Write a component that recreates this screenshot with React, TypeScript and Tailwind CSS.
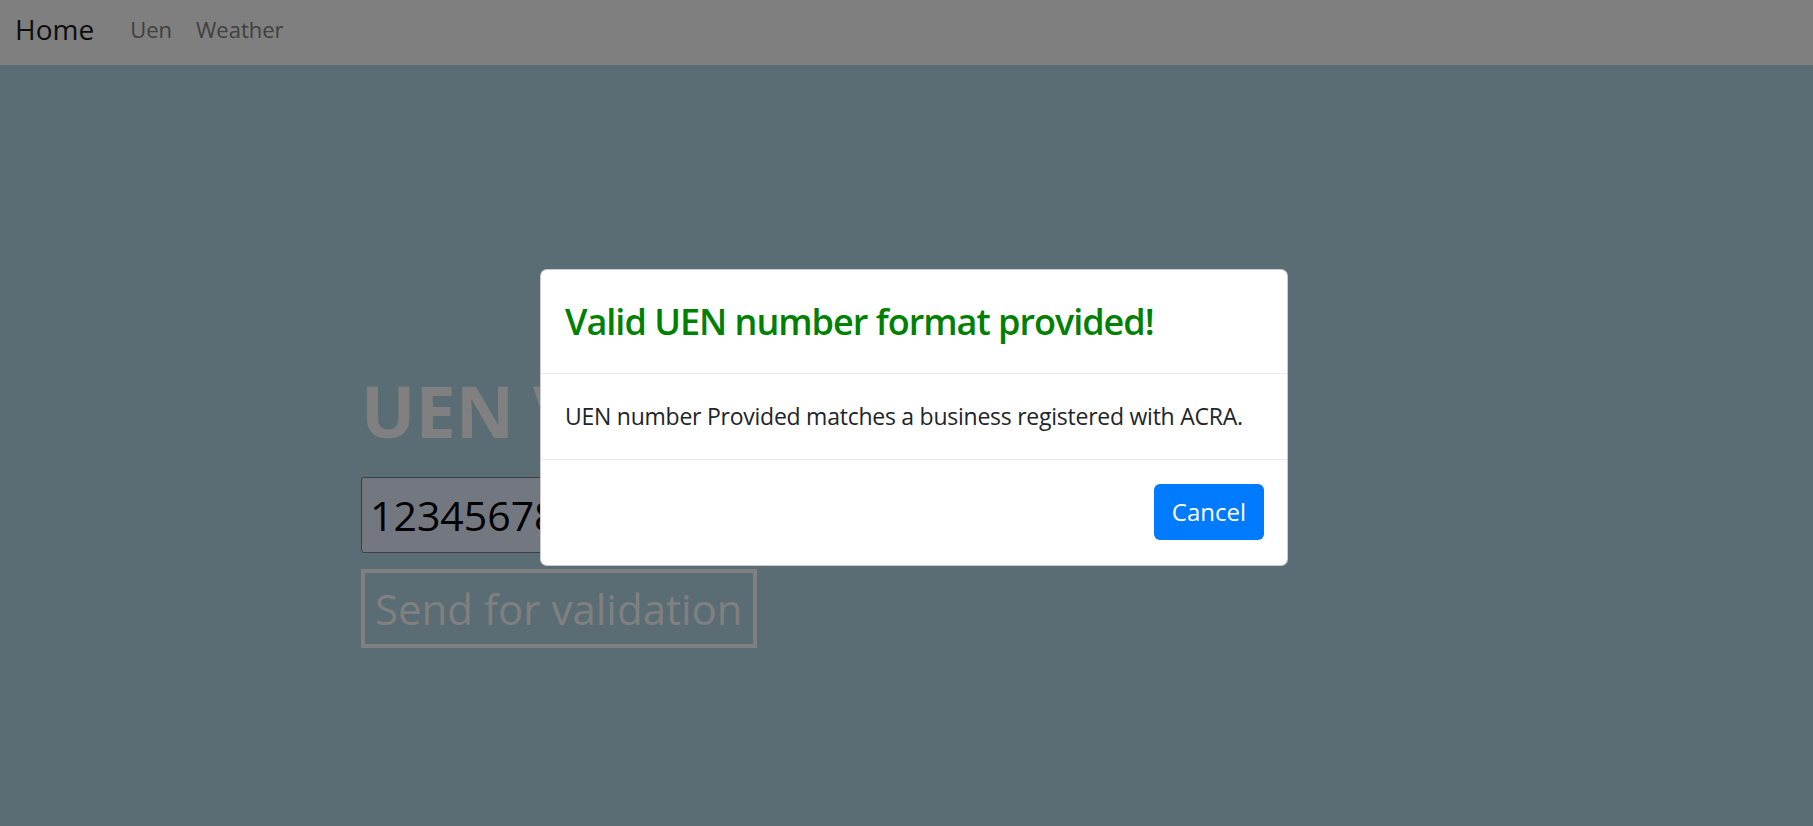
import React from "react"

const font = { fontFamily: '"Open Sans", "Noto Sans", sans-serif' }

function Navbar() {
  return (
    <nav className="h-[65px] bg-[#7f7f7f] flex items-center px-[15px] pb-[7px]">
      <span className="text-[28px] text-[#0e0e0e] mr-[36px] leading-none">Home</span>
      <div className="flex items-center gap-[24px] text-[22px] text-[#404040] leading-none">
        <span>Uen</span>
        <span>Weather</span>
      </div>
    </nav>
  )
}

function ResultModal() {
  return (
    <div className="absolute left-[540px] top-[269px] w-[748px] bg-white border border-black/20 rounded-[7px]">
      <div className="px-[24px] pt-[25px] pb-[24px] border-b border-[#e9ecef]">
        <h4 className="text-[36px] leading-[54px] font-semibold tracking-[-1px] text-[#008000]">
          Valid UEN number format provided!
        </h4>
      </div>
      <div className="px-[24px] pt-[24px] pb-[25px] border-b border-[#e9ecef]">
        <p className="text-[23px] leading-[36px] tracking-[-0.25px] text-[#212529] whitespace-nowrap">
          UEN number Provided matches a business registered with ACRA.
        </p>
      </div>
      <div className="px-[23px] pt-[24px] pb-[25px] flex justify-end">
        <button className="h-[56px] px-[18px] rounded-[6px] bg-[#007bff] text-white text-[24px] leading-[36px]">
          Cancel
        </button>
      </div>
    </div>
  )
}

export default function App() {
  return (
    <div className="relative w-full h-[826px] overflow-hidden bg-[#5a6d74]" style={font}>
      <Navbar />

      {/* page content under the backdrop */}
      <main className="pl-[361px] pt-[302px]">
        <h1 className="text-[72px] leading-[1.2] font-bold text-[#808080]">UEN Validation</h1>
        <input
          readOnly
          value="12345678A"
          className="mt-[24px] block w-[560px] h-[76px] px-[8px] bg-[#737780] border border-[#3c3f44] rounded-[3px] text-[41px] text-black outline-none"
        />
        <button className="mt-[16px] block h-[79px] px-[10px] border-[4px] border-[#808080] text-[42px] leading-none text-[#808080]">
          Send for validation
        </button>
      </main>

      <ResultModal />
    </div>
  )
}
